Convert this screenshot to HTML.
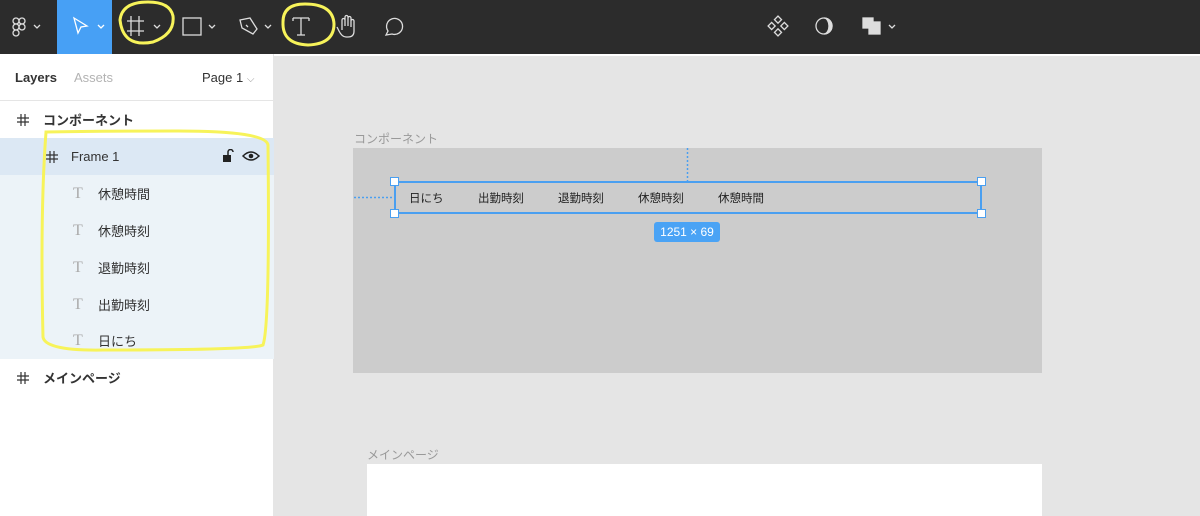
<!DOCTYPE html>
<html><head><meta charset="utf-8"><style>
*{margin:0;padding:0;box-sizing:border-box}
body{width:1200px;height:516px;overflow:hidden;background:#e5e5e5;font-family:"Liberation Sans","Noto Sans CJK JP",sans-serif;position:relative}
.tb{position:absolute;left:0;top:0;width:1200px;height:54px;background:#2c2c2c}
.side{position:absolute;left:0;top:54px;width:274px;height:462px;background:#fff;border-right:1px solid #e5e5e5}
.row{position:absolute;left:0;width:274px;height:37px;font-size:13px;color:#333;display:flex;align-items:center}
.t{position:absolute;font-size:11.5px}
.h{position:absolute;top:13px}
.b{position:absolute;background:#4a9ff0}
</style></head><body>
<div class="tb">
<div style="position:absolute;left:57px;top:0;width:55px;height:54px;background:#47a0f5"></div>
<svg width="1200" height="54" style="position:absolute;left:0;top:0" fill="none" stroke="#ddd" stroke-width="1.3">
<g transform="translate(13,18)"><circle cx="3" cy="3" r="3"/><circle cx="9" cy="3" r="3"/><circle cx="3" cy="9" r="3"/><circle cx="9" cy="9" r="3"/><circle cx="3" cy="15" r="3"/></g>
<path d="M34 25l3 3 3-3"/>
<path d="M74 18l13 8-6 1-3 6z" stroke="#fff"/><path d="M98 25l3 3 3-3" stroke="#fff"/>
<path d="M131 16v20M139 16v20M127 21h17M127 31h17"/><path d="M154 25l3 3 3-3"/>
<rect x="183" y="18" width="18" height="17"/><path d="M209 25l3 3 3-3"/>
<path d="M240 20l10-2 7 11-4 5-11-6z M246 25l2 2"/><path d="M265 25l3 3 3-3"/>
<path d="M293 18h16M301 18v17M297 35h8M293 18v3M309 18v3"/>
<path d="M342 30v-10a1.5 1.5 0 013 0v6v-9a1.5 1.5 0 013 0v9v-8a1.5 1.5 0 013 0v9v-6a1.5 1.5 0 013 0v10q0 6-6 6h-2q-4 0-7-6l-2-4"/>
<path d="M386 35l2-4a8 8 0 114 3z"/>
<g transform="translate(778,26) rotate(45)"><rect x="-7" y="-7" width="5" height="5"/><rect x="2" y="-7" width="5" height="5"/><rect x="-7" y="2" width="5" height="5"/><rect x="2" y="2" width="5" height="5"/></g>
<circle cx="824" cy="26" r="8"/><path d="M824 18a8 8 0 010 16a5 8 0 000-16z" fill="#ddd"/>
<rect x="863" y="18" width="10" height="10" fill="#ddd"/><rect x="869" y="22" width="11" height="12" fill="#ddd"/>
<path d="M889 25l3 3 3-3"/>
</svg>
</div>
<div style="position:absolute;left:0;top:54px;width:1200px;height:2px;background:#fff"></div>
<div class="side">
<div style="position:absolute;left:15px;top:16px;font-size:13px;font-weight:bold;color:#333">Layers</div>
<div style="position:absolute;left:74px;top:16px;font-size:13px;color:#b3b3b3">Assets</div>
<div style="position:absolute;left:202px;top:16px;font-size:13px;color:#333">Page 1 <span style="color:#999;font-size:10px">⌵</span></div>
<div style="position:absolute;left:0;top:46px;width:274px;height:1px;background:#e5e5e5"></div>
<div class="row" style="top:47px;font-weight:bold"><svg class="h" style="left:17px" width="12" height="12" stroke="#333" stroke-width="1.2"><path d="M4 0v12M8 0v12M0 4h12M0 8h12"/></svg><span style="position:absolute;left:43px">コンポーネント</span></div>
<div class="row" style="top:84px;background:#dce8f4"><svg class="h" style="left:46px" width="12" height="12" stroke="#333" stroke-width="1.2"><path d="M4 0v12M8 0v12M0 4h12M0 8h12"/></svg><span style="position:absolute;left:71px">Frame 1</span>
<svg style="position:absolute;left:222px;top:11px" width="40" height="14"><rect x="1" y="6" width="8" height="7" fill="#222"/><path d="M6 6v-3a2.5 2.5 0 015 0" stroke="#222" fill="none" stroke-width="1.5"/><path d="M21 7q8-8 16 0q-8 8-16 0z" stroke="#222" fill="none" stroke-width="1.5"/><circle cx="29" cy="7" r="2.3" fill="#222"/></svg></div>
<div style="position:absolute;left:0;top:121px;width:274px;height:184px;background:#ecf3f8"></div>
<div class="row" style="top:121px"><span style="position:absolute;left:73px;color:#aaa;font-family:'Liberation Serif';font-size:16px">T</span><span style="position:absolute;left:98px">休憩時間</span></div>
<div class="row" style="top:158px"><span style="position:absolute;left:73px;color:#aaa;font-family:'Liberation Serif';font-size:16px">T</span><span style="position:absolute;left:98px">休憩時刻</span></div>
<div class="row" style="top:195px"><span style="position:absolute;left:73px;color:#aaa;font-family:'Liberation Serif';font-size:16px">T</span><span style="position:absolute;left:98px">退勤時刻</span></div>
<div class="row" style="top:232px"><span style="position:absolute;left:73px;color:#aaa;font-family:'Liberation Serif';font-size:16px">T</span><span style="position:absolute;left:98px">出勤時刻</span></div>
<div class="row" style="top:268px"><span style="position:absolute;left:73px;color:#aaa;font-family:'Liberation Serif';font-size:16px">T</span><span style="position:absolute;left:98px">日にち</span></div>
<div class="row" style="top:305px;font-weight:bold"><svg class="h" style="left:17px" width="12" height="12" stroke="#333" stroke-width="1.2"><path d="M4 0v12M8 0v12M0 4h12M0 8h12"/></svg><span style="position:absolute;left:43px">メインページ</span></div>
</div>
<div class="t" style="left:354px;top:130px;color:#999;font-size:12px">コンポーネント</div>
<div style="position:absolute;left:353px;top:148px;width:689px;height:225px;background:#cccccc"></div>
<div class="b" style="left:394px;top:181px;width:588px;height:2px"></div>
<div class="b" style="left:394px;top:212px;width:588px;height:2px"></div>
<div class="b" style="left:394px;top:181px;width:2px;height:33px"></div>
<div class="b" style="left:980px;top:181px;width:2px;height:33px"></div>
<svg width="1200" height="516" style="position:absolute;left:0;top:0" stroke="#4a9ff0" stroke-width="1.5" stroke-dasharray="2 2"><path d="M687.5 148v33M354 197.5h40"/></svg>
<div style="position:absolute;left:390px;top:177px;width:9px;height:9px;background:#fff;border:1.5px solid #4a9ff0"></div>
<div style="position:absolute;left:977px;top:177px;width:9px;height:9px;background:#fff;border:1.5px solid #4a9ff0"></div>
<div style="position:absolute;left:390px;top:209px;width:9px;height:9px;background:#fff;border:1.5px solid #4a9ff0"></div>
<div style="position:absolute;left:977px;top:209px;width:9px;height:9px;background:#fff;border:1.5px solid #4a9ff0"></div>
<div class="t" style="left:409px;top:190px;color:#222">日にち</div>
<div class="t" style="left:478px;top:190px;color:#222">出勤時刻</div>
<div class="t" style="left:558px;top:190px;color:#222">退勤時刻</div>
<div class="t" style="left:638px;top:190px;color:#222">休憩時刻</div>
<div class="t" style="left:718px;top:190px;color:#222">休憩時間</div>
<div style="position:absolute;left:654px;top:222px;width:66px;height:20px;background:#4aa3f5;border-radius:3px;color:#fff;font-size:12px;text-align:center;line-height:20px">1251 × 69</div>
<div class="t" style="left:367px;top:446px;color:#999;font-size:12px">メインページ</div>
<div style="position:absolute;left:367px;top:464px;width:675px;height:52px;background:#fff"></div>
<svg width="1200" height="516" style="position:absolute;left:0;top:0" fill="none" stroke="#f7f35a" stroke-width="3">
<path d="M120 20q2-18 28-18q22 0 25 14q2 18-20 26q-30 6-33-22z"/>
<path d="M283 22q0-18 22-18q28 0 29 20q0 20-26 21q-26-1-25-23z"/>
<path d="M46 132q-6 80-3 205q2 14 60 13q150 0 160-5q7-20 5-200q-2-14-90-14q-90 0-132 1z"/>
</svg>
</body></html>
